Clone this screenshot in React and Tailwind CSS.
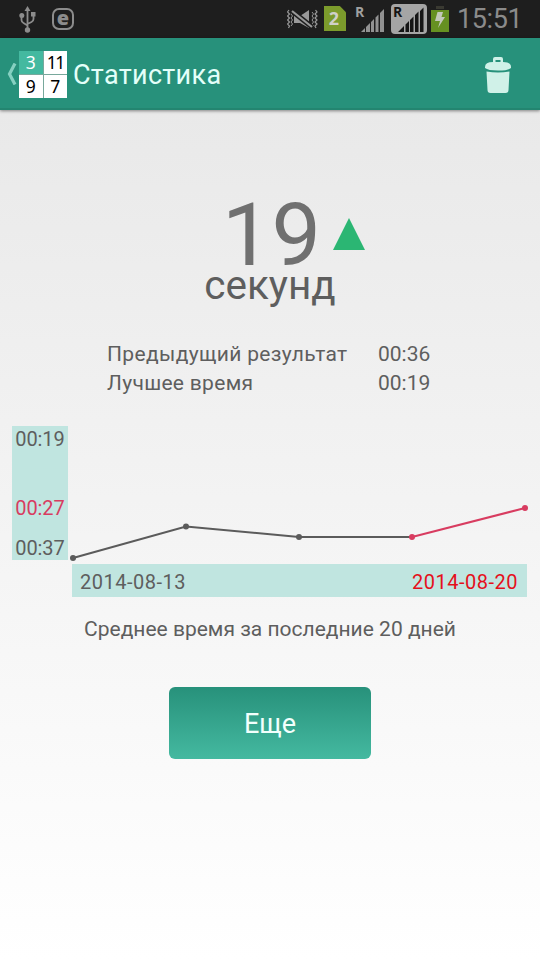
const points = [
  [73, 132],
  [186, 100.5],
  [299, 111],
  [412, 111],
  [525, 82],
];

function UsbIcon() {
  return (
    <svg width="18" height="28" viewBox="0 0 18 28" fill="none" stroke="#8c8c8c" strokeWidth="1.8">
      <path d="M8.5 4v20M2.500 10v4q0 2 2 3l4 2.500M14.500 8v5q0 2-2 3l-4 2" />
      <path d="M8.500 0l3 5h-6z" fill="#8c8c8c" stroke="none" />
      <circle cx="8.500" cy="24" r="2.700" fill="#8c8c8c" stroke="none" />
      <circle cx="2.800" cy="9.500" r="2.500" fill="#8c8c8c" stroke="none" />
      <path d="M12 6h4.500v4.500H12z" fill="#8c8c8c" stroke="none" />
    </svg>
  );
}

function MuteIcon() {
  return (
    <svg width="31" height="22" viewBox="0 0 31 22" fill="none" stroke="#999" strokeWidth="1.2">
      <path d="M2 1l-1.500 2 2 2-2 2 2 2-2 2 2 2-2 2 2 2-1 2M28.500 1l1.500 2-2 2 2 2-2 2 2 2-2 2 2 2-2 2 1 2" />
      <path d="M5.500 3L4 5l1.500 2L4 9l1.500 2L4 13l1.500 2L4 17M25 3l1.500 2L25 7l1.500 2L25 11l1.500 2L25 15l1.500 2" strokeWidth="1" />
      <path d="M7 7h6l9-6v18l-9-5H7z" fill="#999" stroke="none" />
      <path d="M5 2l20 16" stroke="#1e1e1e" strokeWidth="5" />
      <path d="M5 2l20 16" strokeWidth="2.200" />
    </svg>
  );
}

function Signal() {
  return (
    <svg width="30" height="32" viewBox="0 0 30 32">
      <text x="0" y="14.500" fontFamily="Open Sans, sans-serif" fontSize="14" fontWeight="700" fill="#a0a0a0">R</text>
      <path d="M6 30l4-4v4zM11 25l4-4v9h-4zM16 20l3-3v13h-3zM20.500 15.500l3-3V30h-3zM25 11l4-4v23h-4z" fill="#929292" />
    </svg>
  );
}

function SignalBoxed() {
  return (
    <svg width="36" height="30" viewBox="0 0 36 30">
      <rect width="36" height="30" rx="4" fill="#a5a5a5" />
      <text x="2" y="13" fontFamily="Open Sans, sans-serif" fontSize="14" fontWeight="700" fill="#151515">R</text>
      <path d="M7 28l6-6v6zM14.500 20.500l3.500-3.500v11h-3.500zM19 16l3.500-3.500V28H19zM24 11l3.500-3.500V28H24zM29 7l3.500-3.500V28H29z" fill="#151515" />
    </svg>
  );
}

function Battery() {
  return (
    <svg width="18" height="26" viewBox="0 0 18 26">
      <path d="M5 0h8v3H5z" fill="#3a3a32" />
      <path d="M0 4h18v22H0z" fill="#669021" />
      <path d="M6.500 6H12l-1.500 5H14L7 22l2-7H4z" fill="#c3c8ba" />
    </svg>
  );
}

function StatusBar() {
  return (
    <div className="flex h-[38px] items-start bg-[#1e1e1e]">
      <div className="ml-[19px] mt-[6px]"><UsbIcon /></div>
      <div className="ml-[15px] mt-[8px] flex size-[22px] items-center justify-center rounded-[7px] border-2 border-[#8c8c8c] font-['Open_Sans',sans-serif] text-[20px] leading-[15px] font-extrabold text-[#8c8c8c]">
        <span className="-mt-[4px]">e</span>
      </div>
      <div className="ml-[213px] mt-[9px]"><MuteIcon /></div>
      <div className="ml-[6px] mt-[6px] flex h-[25px] w-[22px] items-center justify-center bg-[#7c9b2c] pr-[2px] font-['Open_Sans',sans-serif] text-[18px] font-bold text-[#d0d0c8] [clip-path:polygon(0_0,72%_0,100%_25%,100%_100%,0_100%)]">2</div>
      <div className="ml-[9px] mt-[2px]"><Signal /></div>
      <div className="ml-[6px] mt-[4px]"><SignalBoxed /></div>
      <div className="ml-[4px] mt-[6px]"><Battery /></div>
      <span className="ml-[8px] mt-[5px] text-[27px] leading-[29px] tracking-[-0.4px] whitespace-nowrap text-[#8b8b8b]">15:51</span>
    </div>
  );
}

function AppBar() {
  return (
    <header className="z-10 flex h-[72px] items-center border-b-2 border-[#238570] bg-[#27917b] pt-[3px] shadow-[0_1px_3px_rgba(0,0,0,0.45)]">
      <svg className="ml-[6px] -mt-px" width="12" height="22" viewBox="0 0 12 22" fill="none">
        <path d="M9 .5L3.500 11 9 21.500" stroke="#86d0c1" strokeWidth="3.200" />
      </svg>
      <div className="ml-px grid h-[47px] w-[48px] grid-cols-2 grid-rows-2 gap-px bg-[#78a89c] font-['Noto_Sans',sans-serif] text-[17.5px] leading-[23px] text-black">
        <div className="bg-[#44b9a0] text-center text-white">3</div>
        <div className="bg-white text-center tracking-[-1.5px]">11</div>
        <div className="bg-white text-center">9</div>
        <div className="bg-white text-center">7</div>
      </div>
      <h1 className="ml-[6px] text-[27px] leading-[32px] tracking-[0.3px] whitespace-nowrap text-[#e3fff9]">Статистика</h1>
      <svg className="mr-[29px] ml-auto" width="26" height="36" viewBox="0 0 26 36">
        <path d="M8 6V2q0-2 2-2h6q2 0 2 2v4h-2.500V3h-5v3z" fill="#d0f1e8" />
        <path d="M0 10Q0 5 8 5h10q8 0 8 5v1q-3 2.500-13 2.500T0 11z" fill="#d0f1e8" />
        <path d="M1.500 14.500Q13 16.500 24.500 14.500L23.500 33q0 3-3 3h-15q-3 0-3-3z" fill="#d0f1e8" />
      </svg>
    </header>
  );
}

function Chart() {
  return (
    <section className="mt-[28px]">
      <div className="flex h-[134px]">
        <div className="ml-[12px] flex w-[56px] flex-col bg-[#c0e5e0] text-center text-[20px] leading-[26px] tracking-[-0.1px]">
          <span>00:19</span>
          <span className="mt-[43px] text-[#d83c60]">00:27</span>
          <span className="mt-[14px]">00:37</span>
        </div>
        <svg className="overflow-visible" width="472" height="134" viewBox="68 0 472 134">
          <polyline points={points.slice(0, 4).join(' ')} fill="none" stroke="#5b5b5b" strokeWidth="2" />
          <polyline points={points.slice(3).join(' ')} fill="none" stroke="#d83c60" strokeWidth="2" />
          {points.map(([x, y], i) => (
            <circle key={x} cx={x} cy={y} r="3" fill={i < 3 ? '#5b5b5b' : '#d83c60'} />
          ))}
        </svg>
      </div>
      <div className="mt-[4px] mr-[13px] ml-[72px] flex h-[33px] items-center justify-between bg-[#c0e5e0] pr-[9px] pl-[8px] text-[20px] leading-[26px] tracking-[0.5px]">
        <span className="pt-[3px]">2014-08-13</span>
        <span className="pt-[3px] text-[#e5101c]">2014-08-20</span>
      </div>
    </section>
  );
}

export default function App() {
  return (
    <div className="flex h-[960px] w-[540px] flex-col overflow-hidden bg-white font-[Roboto,sans-serif]">
      <StatusBar />
      <AppBar />
      <main className="flex flex-1 flex-col bg-linear-to-b from-[#e9e9e9] to-white text-[#5e5e5e]">
        <div className="mt-[101px] flex items-center pl-[222px]">
          <span className="pt-[2px] text-[88px] leading-[44px] text-[#707070]">19</span>
          <svg className="ml-[12px]" width="32" height="32" viewBox="0 0 32 32"><path d="M16 0l16 32H0z" fill="#2bb673" /></svg>
        </div>
        <div className="mt-[7px] text-center text-[40.5px] leading-[42px]">секунд</div>
        <dl className="mt-[34px] ml-[107px] grid grid-cols-[271px_auto] text-[21px] leading-[29px] whitespace-nowrap">
          <dt className="tracking-[0.35px]">Предыдущий результат</dt>
          <dd>00:36</dd>
          <dt className="tracking-[0.3px]">Лучшее время</dt>
          <dd>00:19</dd>
        </dl>
        <Chart />
        <p className="mt-[18px] text-center text-[21px] leading-[28px]">Среднее время за последние 20 дней</p>
        <button className="mt-[44px] h-[72px] w-[202px] self-center rounded-[6px] bg-linear-to-b from-[#27917b] to-[#44b9a0] pt-[2px] text-[27px] text-[#f2fffc]">Еще</button>
      </main>
    </div>
  );
}
